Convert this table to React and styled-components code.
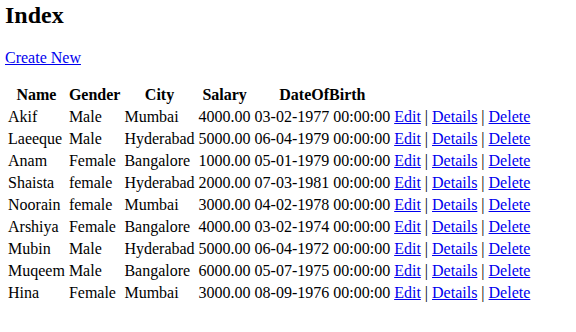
import React from "react";
import styled, { createGlobalStyle } from "styled-components";

const GlobalStyle = createGlobalStyle`
  body {
    margin: 0;
    font-family: "Liberation Serif", "Times New Roman", serif;
    font-size: 16px;
    color: #000;
    background: #fff;
  }
`;

const Page = styled.div`
  padding: 2px 0 0 5px;
`;

const Title = styled.h2`
  margin: 0 0 20px;
  font-size: 24px;
  font-weight: bold;
`;

const Para = styled.p`
  margin: 0 0 16px;
`;

const Link = styled.a`
  color: #0000ee;
  text-decoration: underline;
  cursor: pointer;
`;

const Table = styled.table`
  border-spacing: 2px;
  border-collapse: separate;
`;

const Th = styled.th`
  padding: 1px;
  font-weight: bold;
  text-align: center;
`;

const Td = styled.td`
  padding: 1px;
  white-space: nowrap;
`;

const employees = [
  ["Akif", "Male", "Mumbai", "4000.00", "03-02-1977 00:00:00"],
  ["Laeeque", "Male", "Hyderabad", "5000.00", "06-04-1979 00:00:00"],
  ["Anam", "Female", "Bangalore", "1000.00", "05-01-1979 00:00:00"],
  ["Shaista", "female", "Hyderabad", "2000.00", "07-03-1981 00:00:00"],
  ["Noorain", "female", "Mumbai", "3000.00", "04-02-1978 00:00:00"],
  ["Arshiya", "Female", "Bangalore", "4000.00", "03-02-1974 00:00:00"],
  ["Mubin", "Male", "Hyderabad", "5000.00", "06-04-1972 00:00:00"],
  ["Muqeem", "Male", "Bangalore", "6000.00", "05-07-1975 00:00:00"],
  ["Hina", "Female", "Mumbai", "3000.00", "08-09-1976 00:00:00"],
];

export default function App() {
  return (
    <Page>
      <GlobalStyle />
      <Title>Index</Title>
      <Para>
        <Link>Create New</Link>
      </Para>
      <Table>
        <thead>
          <tr>
            <Th>Name</Th>
            <Th>Gender</Th>
            <Th>City</Th>
            <Th>Salary</Th>
            <Th>DateOfBirth</Th>
            <Th></Th>
          </tr>
        </thead>
        <tbody>
          {employees.map(([name, gender, city, salary, dob]) => (
            <tr key={name}>
              <Td>{name}</Td>
              <Td>{gender}</Td>
              <Td>{city}</Td>
              <Td>{salary}</Td>
              <Td>{dob}</Td>
              <Td>
                <Link>Edit</Link> | <Link>Details</Link> | <Link>Delete</Link>
              </Td>
            </tr>
          ))}
        </tbody>
      </Table>
    </Page>
  );
}
